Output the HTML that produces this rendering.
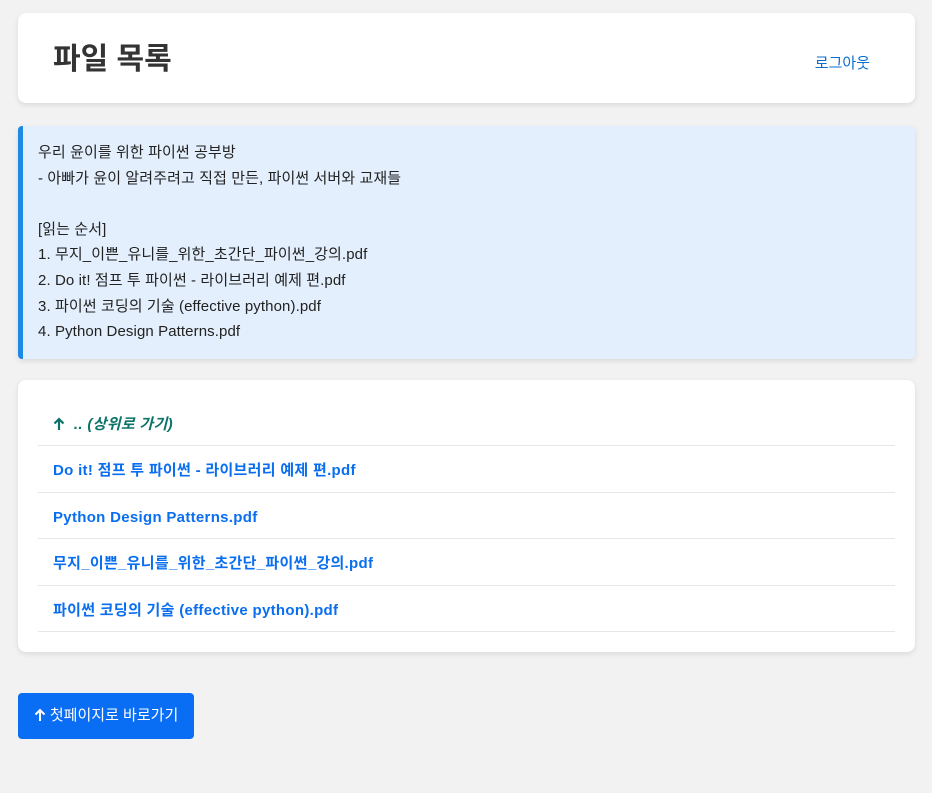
<!DOCTYPE html><html><head><meta charset="utf-8"><style>
body{margin:0;background:#f2f2f2;font-family:"Liberation Sans","Noto Sans CJK KR",sans-serif;color:#222}
.wrap{position:absolute;left:18px;width:897px}
.card{background:#fff;border-radius:8px;box-shadow:0 2px 6px rgba(0,0,0,.1)}
.hdr{top:13px;height:90px}
.hdr h1{position:absolute;left:35px;top:25px;margin:0;font-size:30px;font-weight:bold;color:#333;line-height:44px}
.hdr a{position:absolute;right:45px;top:39px;font-size:15px;color:#0a6ed1;text-decoration:none}
.info{top:126px;height:233px;background:#e3effc;border-left:5px solid #1e88e5;width:897px;border-radius:4px;box-shadow:0 2px 6px rgba(0,0,0,.1);box-sizing:border-box;padding:14px 15px;font-size:15px;line-height:25.6px;white-space:pre;letter-spacing:0.1px}
.list{top:380px;height:272px}
.list ul{list-style:none;margin:0;padding:20px 20px}
.list li{height:46.4px;border-bottom:1px solid #e6e6e6;box-sizing:border-box;padding-left:15px;padding-top:3px;line-height:43px;font-size:15px;font-weight:bold;color:#0a6ef0;letter-spacing:0.3px}
.list li.up{color:#0b7367;font-style:italic}
.btn{position:absolute;left:18px;top:693px;width:176px;height:46px;background:#0a6ef5;border-radius:4px;color:#fff;font-size:15px;line-height:46px;text-align:center}
svg{vertical-align:-2px}
</style></head><body>
<div class="wrap card hdr"><h1>파일 목록</h1><a>로그아웃</a></div>
<div class="wrap info">우리 윤이를 위한 파이썬 공부방
- 아빠가 윤이 알려주려고 직접 만든, 파이썬 서버와 교재들

[읽는 순서]
1. 무지_이쁜_유니를_위한_초간단_파이썬_강의.pdf
2. Do it! 점프 투 파이썬 - 라이브러리 예제 편.pdf
3. 파이썬 코딩의 기술 (effective python).pdf
4. Python Design Patterns.pdf</div>
<div class="wrap card list"><ul>
<li class="up"><svg width="12" height="14" viewBox="0 0 12 14"><path d="M6 13V2M1.5 6.5L6 2l4.5 4.5" stroke="#0b7367" stroke-width="2.2" fill="none"/></svg>&nbsp;&nbsp;.. (상위로 가기)</li>
<li>Do it! 점프 투 파이썬 - 라이브러리 예제 편.pdf</li>
<li>Python Design Patterns.pdf</li>
<li>무지_이쁜_유니를_위한_초간단_파이썬_강의.pdf</li>
<li>파이썬 코딩의 기술 (effective python).pdf</li>
</ul></div>
<div class="btn"><svg width="12" height="14" viewBox="0 0 12 14"><path d="M6 13V2M1.5 6.5L6 2l4.5 4.5" stroke="#fff" stroke-width="2" fill="none"/></svg> 첫페이지로 바로가기</div>
</body></html>
